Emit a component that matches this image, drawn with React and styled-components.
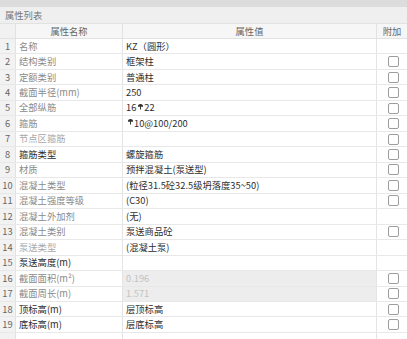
import React from "react";
import styled, { createGlobalStyle } from "styled-components";

const Global = createGlobalStyle`
  html, body { margin: 0; padding: 0; background: #fff; }
  body { font-family: "Noto Sans CJK SC", "Noto Sans", sans-serif; }
`;

const Page = styled.div`
  width: 407px;
  height: 339px;
  overflow: hidden;
  background: #fff;
  display: flex;
  flex-direction: column;
`;

const TopBand = styled.div`
  height: 7px;
  flex: none;
  background: #dcdcdc;
`;

const TitleBar = styled.div`
  height: 17px;
  flex: none;
  box-sizing: border-box;
  background: #efefef;
  border-bottom: 1px solid #e2e2e2;
  display: flex;
  align-items: center;
  padding-left: 5px;
  font-size: 9.3px;
  color: #777;
`;

const COLS = "16px 107px 254px 30px";

const HeaderRow = styled.div`
  display: grid;
  grid-template-columns: ${COLS};
  height: 15px;
  flex: none;
  box-sizing: border-box;
  background: #f6f6f6;
  border-bottom: 1px solid #e2e2e2;
  font-size: 9.3px;
  color: #666;
`;

const HeadCell = styled.div`
  display: flex;
  align-items: center;
  justify-content: center;
  border-right: ${(p) => (p.$last ? "none" : "1px solid #e2e2e2")};
  background: ${(p) => (p.$num ? "#f1f1f1" : "transparent")};
`;

const Row = styled.div`
  display: grid;
  grid-template-columns: ${COLS};
  height: 15.47px;
  flex: none;
  box-sizing: border-box;
  border-bottom: 1px solid #e8e8e8;
  font-size: 9.3px;
  line-height: 1;
`;

const NumCell = styled.div`
  background: #f2f2f2;
  border-right: 1px solid #e2e2e2;
  display: flex;
  align-items: center;
  justify-content: center;
  color: #666;
`;

const NameCell = styled.div`
  border-right: 1px solid #e4e4e4;
  display: flex;
  align-items: center;
  padding-left: 3px;
  white-space: nowrap;
  overflow: hidden;
  color: ${(p) => (p.$tone === "dark" ? "#2b2b2b" : p.$tone === "light" ? "#a8a8a8" : "#8a8a8a")};
`;

const ValueCell = styled.div`
  border-right: 1px solid #e4e4e4;
  display: flex;
  align-items: center;
  padding-left: 3px;
  white-space: nowrap;
  overflow: hidden;
  color: ${(p) => (p.$disabled ? "#c2c2c2" : "#2e2e2e")};
  background: ${(p) => (p.$disabled ? "#ededed" : "transparent")};
`;

const ExtraCell = styled.div`
  display: flex;
  align-items: center;
  justify-content: center;
  padding-left: 2px;
`;

const Check = styled.span`
  width: 11px;
  height: 11px;
  box-sizing: border-box;
  border: 1px solid #9d9d9d;
  border-radius: 2px;
  background: #fff;
`;

const Sup = styled.svg`
  width: 7px;
  height: 7px;
  margin: 0 0.5px 4px 0.5px;
  flex: none;
`;

const Steel = () => (
  <Sup viewBox="0 0 8 8">
    <path d="M1 4.2 A3 3 0 0 1 7 4.2 Z" fill="#333" />
    <path d="M4 1.2 V7.5" stroke="#333" strokeWidth="1.1" />
  </Sup>
);

const rows = [
  { n: "名称", v: "KZ（圆形）", c: false },
  { n: "结构类别", v: "框架柱", c: true },
  { n: "定额类别", v: "普通柱", c: true },
  { n: "截面半径(mm)", v: "250", c: true },
  { n: "全部纵筋", v: <>16<Steel />22</>, c: true },
  { n: "箍筋", v: <><Steel />10@100/200</>, c: true },
  { n: "节点区箍筋", v: "", c: true, tone: "light" },
  { n: "箍筋类型", v: "螺旋箍筋", c: true, tone: "dark" },
  { n: "材质", v: "预拌混凝土(泵送型)", c: true },
  { n: "混凝土类型", v: "(粒径31.5砼32.5级坍落度35~50)", c: true },
  { n: "混凝土强度等级", v: "(C30)", c: true },
  { n: "混凝土外加剂", v: "(无)", c: false },
  { n: "混凝土类别", v: "泵送商品砼", c: true },
  { n: "泵送类型", v: "(混凝土泵)", c: false, tone: "light" },
  { n: "泵送高度(m)", v: "", c: false, tone: "dark" },
  { n: <>截面面积(m²)</>, v: "0.196", c: true, dis: true },
  { n: "截面周长(m)", v: "1.571", c: true, dis: true },
  { n: "顶标高(m)", v: "层顶标高", c: true, tone: "dark" },
  { n: "底标高(m)", v: "层底标高", c: true, tone: "dark" },
];

export default function App() {
  return (
    <Page>
      <Global />
      <TopBand />
      <TitleBar>属性列表</TitleBar>
      <HeaderRow>
        <HeadCell $num />
        <HeadCell>属性名称</HeadCell>
        <HeadCell>属性值</HeadCell>
        <HeadCell $last>附加</HeadCell>
      </HeaderRow>
      {rows.map((r, i) => (
        <Row key={i}>
          <NumCell>{i + 1}</NumCell>
          <NameCell $tone={r.tone}>{r.n}</NameCell>
          <ValueCell $disabled={r.dis}>{r.v}</ValueCell>
          <ExtraCell>{r.c ? <Check /> : null}</ExtraCell>
        </Row>
      ))}
      <Row>
        <NumCell />
        <NameCell />
        <ValueCell />
        <ExtraCell />
      </Row>
    </Page>
  );
}
